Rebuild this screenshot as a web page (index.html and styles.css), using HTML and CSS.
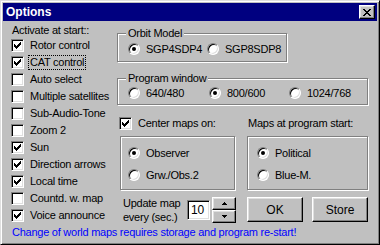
FILE: index.html
```html
<!DOCTYPE html>
<html lang="en">

<head>
    <meta charset="UTF-8">
    <title>Options</title>
    <link rel="stylesheet" href="styles.css">
</head>

<body>
    <div class="window">
        <div class="titlebar">
            <span class="title">Options</span>
            <span class="close-btn">
                <svg width="8" height="7" viewBox="0 0 8 7" shape-rendering="crispEdges">
                    <path d="M0 0h2v1H0zM6 0h2v1H6zM1 1h2v1H1zM5 1h2v1H5zM2 2h4v1H2zM3 3h2v1H3zM2 4h4v1H2zM1 5h2v1H1zM5 5h2v1H5zM0 6h2v1H0zM6 6h2v1H6z" fill="#000"/>
                </svg>
            </span>
        </div>

        <div class="main">
            <div class="start-list">
                <div class="heading">Activate at start::</div>
                <div class="check-row"><span class="checkbox"><svg class="tick" width="7" height="7" viewBox="0 0 7 7" shape-rendering="crispEdges"><path d="M6 0h1v1H6zM5 1h2v1H5zM0 2h1v1H0zM4 2h3v1H4zM0 3h2v1H0zM3 3h3v1H3zM0 4h5v1H0zM1 5h3v1H1zM2 6h1v1H2z"/></svg></span>Rotor control</div>
                <div class="check-row"><span class="checkbox"><svg class="tick" width="7" height="7" viewBox="0 0 7 7" shape-rendering="crispEdges"><path d="M6 0h1v1H6zM5 1h2v1H5zM0 2h1v1H0zM4 2h3v1H4zM0 3h2v1H0zM3 3h3v1H3zM0 4h5v1H0zM1 5h3v1H1zM2 6h1v1H2z"/></svg></span><span class="focused">CAT control</span></div>
                <div class="check-row"><span class="checkbox"></span>Auto select</div>
                <div class="check-row"><span class="checkbox"></span>Multiple satellites</div>
                <div class="check-row"><span class="checkbox"></span>Sub-Audio-Tone</div>
                <div class="check-row"><span class="checkbox"></span>Zoom 2</div>
                <div class="check-row"><span class="checkbox"><svg class="tick" width="7" height="7" viewBox="0 0 7 7" shape-rendering="crispEdges"><path d="M6 0h1v1H6zM5 1h2v1H5zM0 2h1v1H0zM4 2h3v1H4zM0 3h2v1H0zM3 3h3v1H3zM0 4h5v1H0zM1 5h3v1H1zM2 6h1v1H2z"/></svg></span>Sun</div>
                <div class="check-row"><span class="checkbox"><svg class="tick" width="7" height="7" viewBox="0 0 7 7" shape-rendering="crispEdges"><path d="M6 0h1v1H6zM5 1h2v1H5zM0 2h1v1H0zM4 2h3v1H4zM0 3h2v1H0zM3 3h3v1H3zM0 4h5v1H0zM1 5h3v1H1zM2 6h1v1H2z"/></svg></span>Direction arrows</div>
                <div class="check-row"><span class="checkbox"><svg class="tick" width="7" height="7" viewBox="0 0 7 7" shape-rendering="crispEdges"><path d="M6 0h1v1H6zM5 1h2v1H5zM0 2h1v1H0zM4 2h3v1H4zM0 3h2v1H0zM3 3h3v1H3zM0 4h5v1H0zM1 5h3v1H1zM2 6h1v1H2z"/></svg></span>Local time</div>
                <div class="check-row"><span class="checkbox"></span>Countd. w. map</div>
                <div class="check-row"><span class="checkbox"><svg class="tick" width="7" height="7" viewBox="0 0 7 7" shape-rendering="crispEdges"><path d="M6 0h1v1H6zM5 1h2v1H5zM0 2h1v1H0zM4 2h3v1H4zM0 3h2v1H0zM3 3h3v1H3zM0 4h5v1H0zM1 5h3v1H1zM2 6h1v1H2z"/></svg></span>Voice announce</div>
            </div>

            <div class="settings">
                <fieldset class="group orbit">
                    <legend>Orbit Model</legend>
                    <div class="radio-line">
                        <div class="radio-item orbit-item"><span class="radio on"></span>SGP4SDP4</div>
                        <div class="radio-item orbit-item"><span class="radio"></span>SGP8SDP8</div>
                    </div>
                </fieldset>

                <fieldset class="group program">
                    <legend>Program window</legend>
                    <div class="radio-line">
                        <div class="radio-item res-item"><span class="radio"></span>640/480</div>
                        <div class="radio-item res-item"><span class="radio on"></span>800/600</div>
                        <div class="radio-item"><span class="radio"></span>1024/768</div>
                    </div>
                </fieldset>

                <div class="maps-head">
                    <div class="check-row center-check"><span class="checkbox"><svg class="tick" width="7" height="7" viewBox="0 0 7 7" shape-rendering="crispEdges"><path d="M6 0h1v1H6zM5 1h2v1H5zM0 2h1v1H0zM4 2h3v1H4zM0 3h2v1H0zM3 3h3v1H3zM0 4h5v1H0zM1 5h3v1H1zM2 6h1v1H2z"/></svg></span>Center maps on:</div>
                    <div class="maps-label">Maps at program start:</div>
                </div>

                <div class="maps-boxes">
                    <div class="box observer-box">
                        <div class="radio-item"><span class="radio on"></span>Observer</div>
                        <div class="radio-item"><span class="radio"></span>Grw./Obs.2</div>
                    </div>
                    <div class="box style-box">
                        <div class="radio-item"><span class="radio on"></span>Political</div>
                        <div class="radio-item"><span class="radio"></span>Blue-M.</div>
                    </div>
                </div>

                <div class="bottom-row">
                    <div class="update-label">Update map<br>every (sec.)</div>
                    <div class="spin">
                        <div class="spin-field">10</div>
                        <div class="spin-buttons">
                            <span class="spin-btn">
                                <svg width="5" height="3" viewBox="0 0 5 3" shape-rendering="crispEdges"><path d="M2 0h1v1H2zM1 1h3v1H1zM0 2h5v1H0z"/></svg>
                            </span>
                            <span class="spin-btn">
                                <svg width="5" height="3" viewBox="0 0 5 3" shape-rendering="crispEdges"><path d="M0 0h5v1H0zM1 1h3v1H1zM2 2h1v1H2z"/></svg>
                            </span>
                        </div>
                    </div>
                    <div class="button ok-btn">OK</div>
                    <div class="button">Store</div>
                </div>
            </div>
        </div>

        <div class="notice">Change of world maps requires storage and program re-start!</div>
    </div>
</body>

</html>
```

FILE: styles.css
```css
* {
    box-sizing: border-box;
}

body {
    margin: 0;
    font-family: "Liberation Sans", Arial, sans-serif;
    font-size: 11px;
    letter-spacing: -0.25px;
    color: #000;
}

.window {
    width: 380px;
    height: 245px;
    background-color: #c0c0c0;
    border: 1px solid;
    border-color: #dfdfdf #000 #000 #dfdfdf;
    box-shadow: inset 1px 1px #fff, inset -1px -1px #808080;
    padding: 2px;
}

.titlebar {
    height: 18px;
    background-color: #000080;
    color: #fff;
    display: flex;
    align-items: center;
    justify-content: space-between;
    padding: 0 2px 0 3px;
}

.title {
    font-weight: bold;
    font-size: 12px;
    letter-spacing: 0;
}

.close-btn {
    width: 16px;
    height: 14px;
    display: flex;
    align-items: center;
    justify-content: center;
    background-color: #c0c0c0;
    border: 1px solid;
    border-color: #fff #000 #000 #fff;
    box-shadow: inset -1px -1px #808080, inset 1px 1px #dfdfdf;
}

.main {
    display: flex;
}

/* left column with the start options */
.start-list {
    width: 114px;
    padding: 3px 0 0 8px;
}

.heading {
    line-height: 13px;
    padding-left: 1px;
}

.check-row {
    display: flex;
    align-items: center;
    gap: 6px;
    height: 17px;
    line-height: 13px;
    white-space: nowrap;
}

.checkbox {
    width: 13px;
    height: 13px;
    flex: none;
    display: flex;
    align-items: center;
    justify-content: center;
    background-color: #fff;
    border: 1px solid;
    border-color: #808080 #fff #fff #808080;
    box-shadow: inset 1px 1px #000, inset -1px -1px #dfdfdf;
}

.tick {
    display: block;
}

.focused {
    outline: 1px dotted #000;
    outline-offset: 0;
    padding: 0 1px;
    margin-left: -1px;
}

/* right column */
.settings {
    width: 260px;
    padding-top: 6px;
}

.group {
    margin: 0;
    padding: 0;
    border: 1px solid #808080;
    box-shadow: inset 1px 1px #fff, 1px 1px #fff;
}

.group legend {
    margin-left: 8px;
    padding: 0 2px;
    line-height: 13px;
    background-color: #c0c0c0;
}

.orbit {
    width: 166px;
    height: 35px;
}

.program {
    width: 251px;
    height: 33px;
    margin-top: 10px;
}

.radio-line {
    display: flex;
    align-items: center;
    height: 17px;
    padding-left: 10px;
}

.orbit .radio-line {
    height: 18px;
}

.program .radio-line {
    height: 16px;
}

.radio-item {
    display: flex;
    align-items: center;
    gap: 6px;
    height: 16px;
    white-space: nowrap;
}

.orbit-item {
    width: 79px;
}

.res-item {
    width: 81px;
}

.res-item + .res-item {
    width: 80px;
}

.radio {
    position: relative;
    width: 12px;
    height: 12px;
    flex: none;
    border-radius: 50%;
    background-color: #fff;
    border: 1px solid;
    border-color: #808080 #fff #fff #808080;
    box-shadow: inset 1px 1px #000, inset -1px -1px #dfdfdf;
}

.radio.on::after {
    content: "";
    position: absolute;
    left: 3px;
    top: 3px;
    width: 4px;
    height: 4px;
    border-radius: 50%;
    background-color: #000;
}

.maps-head {
    display: flex;
    align-items: center;
    margin-top: 10px;
    height: 17px;
}

.center-check {
    width: 130px;
    padding-left: 2px;
}

.maps-label {
    line-height: 13px;
    padding-left: 1px;
}

.maps-boxes {
    display: flex;
    margin-top: 4px;
}

.box {
    height: 54px;
    border: 1px solid #808080;
    box-shadow: inset 1px 1px #fff, 1px 1px #fff;
    display: flex;
    flex-direction: column;
    gap: 6px;
    padding-top: 8px;
}

.observer-box {
    width: 115px;
    margin-left: 3px;
    padding-left: 7px;
}

.style-box {
    width: 121px;
    margin-left: 12px;
    padding-left: 9px;
}

.bottom-row {
    display: flex;
    align-items: center;
    margin-top: 6px;
    height: 27px;
}

.update-label {
    width: 70px;
    padding-left: 6px;
    line-height: 14px;
    white-space: nowrap;
}

.spin {
    display: flex;
    align-items: center;
    width: 60px;
}

.spin-field {
    width: 23px;
    height: 20px;
    background-color: #fff;
    border: 1px solid;
    border-color: #808080 #fff #fff #808080;
    box-shadow: inset 1px 1px #000, inset -1px -1px #dfdfdf;
    font-size: 12px;
    line-height: 18px;
    padding-left: 3px;
}

.spin-buttons {
    display: flex;
    flex-direction: column;
    margin-left: 2px;
}

.spin-btn {
    width: 24px;
    height: 13px;
    display: flex;
    align-items: center;
    justify-content: center;
    background-color: #c0c0c0;
    border: 1px solid;
    border-color: #fff #000 #000 #fff;
    box-shadow: inset -1px -1px #808080, inset 1px 1px #dfdfdf;
}

.button {
    width: 56px;
    height: 25px;
    display: flex;
    align-items: center;
    justify-content: center;
    font-size: 12px;
    letter-spacing: 0;
    background-color: #c0c0c0;
    border: 1px solid;
    border-color: #fff #000 #000 #fff;
    box-shadow: inset -1px -1px #808080, inset 1px 1px #dfdfdf;
}

.ok-btn {
    margin-right: 9px;
}

.notice {
    color: #0000ff;
    line-height: 13px;
    padding: 2px 0 0 9px;
}
```
